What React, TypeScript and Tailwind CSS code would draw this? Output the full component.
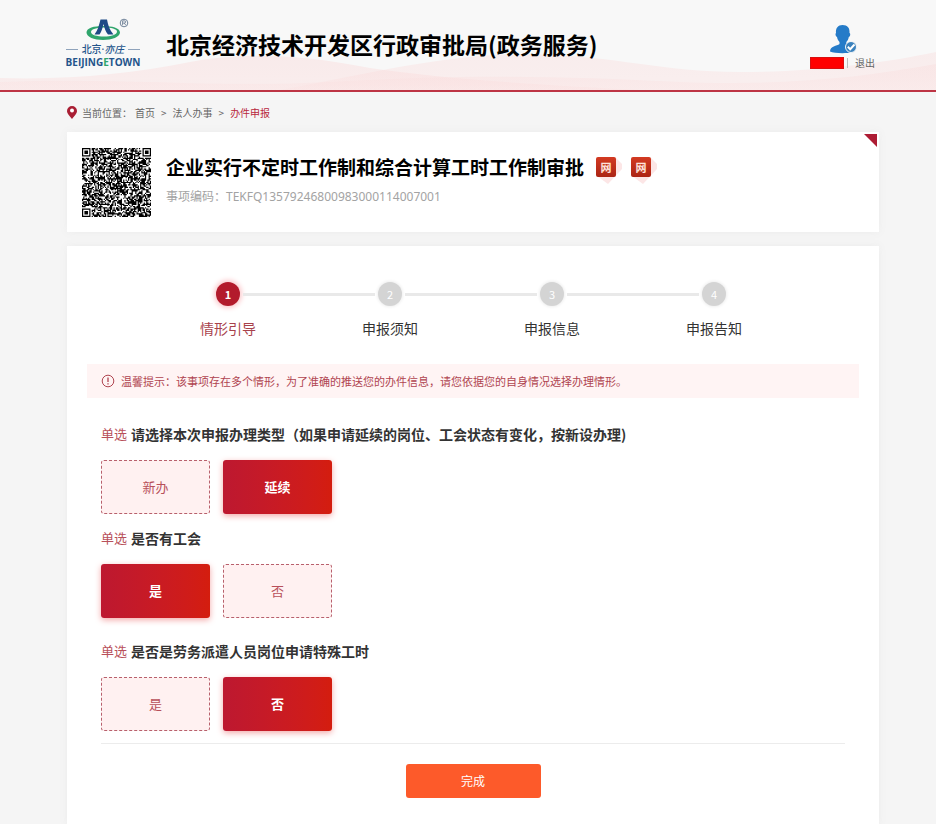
import { useState } from "react";

const SANS = "font-['Noto_Sans','Noto_Sans_CJK_SC',sans-serif]";
const CJK = "font-['Noto_Sans_CJK_SC',sans-serif]";

function Logo() {
  return (
    <div className="flex w-[74px] flex-col items-center text-[#24548b]" aria-label="北京亦庄 BEIJINGETOWN">
      <svg viewBox="0 0 74 24" className="h-6 w-[74px]" aria-hidden="true">
        <path
          fillRule="evenodd"
          d="M37 8 C46 8 54 10 54 14.500 C54 19 46 22 37 22 C28 22 20.500 19 20.500 14.500 C20.500 10 28 8 37 8Z M38 9.500 C31 9.500 25 11 25 14 C25 17 31 18.500 38 18.500 C45 18.500 51 17 51 13.500 C51 11 45 9.500 38 9.500Z"
          fill="#2fa56c"
        />
        <path d="M28.500 16.500 C32 12 33 7 34.500 1.500 H41 C42 7 43.500 12 47.500 16.500 H42 C39.500 13.500 38.500 10 37.500 6 C36.500 10 35.500 13.500 33.500 16.500Z" fill="#1d4a86" />
        <circle cx="58" cy="5" r="3.800" fill="none" stroke="#4d6480" strokeWidth="0.800" />
        <path d="M56.600 7.200V2.800H58.200Q59.600 2.800 59.600 4T58.200 5.100H56.600M58.300 5.100L59.800 7.200" fill="none" stroke="#4d6480" strokeWidth="0.700" />
      </svg>
      <div className="flex h-[14px] w-full items-center justify-between text-[10px] leading-[14px]">
        <span className="h-px w-3 bg-[#8fa3bb]" />
        <span className={`font-medium ${SANS}`}>
          北京·<i>亦庄</i>
        </span>
        <span className="h-px w-3 bg-[#8fa3bb]" />
      </div>
      <span className="font-['Open_Sans',sans-serif] text-[10px] leading-[12px] font-bold">
        BEIJING<span className="text-[#2fa56c]">E</span>TOWN
      </span>
    </div>
  );
}

function Waves() {
  return (
    <svg
      viewBox="0 0 936 40"
      preserveAspectRatio="none"
      className="absolute inset-x-0 bottom-0 -z-10 h-10 w-full"
      aria-hidden="true"
    >
      <defs>
        <linearGradient id="wave" x1="0" y1="0" x2="0" y2="1">
          <stop offset="0" stopColor="#f9d2d2" stopOpacity="0.5" />
          <stop offset="1" stopColor="#fbe3e3" stopOpacity="0.7" />
        </linearGradient>
      </defs>
      <path d="M0 28 C70 30 130 24 190 12 C240 2 300 4 370 18 C450 30 560 36 640 40 H0Z" fill="url(#wave)" opacity="0.7" />
      <path d="M280 40 C360 26 440 4 530 4 C620 6 660 22 740 22 C810 22 880 14 936 2 V40Z" fill="url(#wave)" opacity="0.6" />
      <path d="M0 32 C120 27 210 38 330 32 C460 24 560 26 680 32 C780 36 860 28 936 14 V40 H0Z" fill="url(#wave)" opacity="0.5" />
    </svg>
  );
}

function UserIcon() {
  return (
    <svg viewBox="0 0 28 30" className="h-[30px] w-7" aria-hidden="true">
      <path d="M13.500 1 C9 1 6.500 4 7 9 C6 9.500 6.500 12.500 8 13 C8.300 15 9.500 17 10.500 18 V20 C8 22 1 22 1 27.500 C5 29.500 17 29.500 23 28.500 L18 20 C17.500 19.500 17.300 19 17.300 18 C18.500 17 19.500 15 19.800 13 C21.300 12.500 21.800 9.500 20.500 9 C21 4 18.500 1 13.500 1Z" fill="#257bc8" />
      <circle cx="22" cy="23" r="5.500" fill="#3b82bd" stroke="#f7f7f7" strokeWidth="1" />
      <path d="M18.800 22.800L21.200 25.200L25.500 20.500" fill="none" stroke="#fff" strokeWidth="2" />
    </svg>
  );
}

const QR_SIZE = 57;

function finderModule(x: number, y: number): boolean | null {
  const corners = [
    [0, 0],
    [QR_SIZE - 7, 0],
    [0, QR_SIZE - 7],
  ];
  for (const [cx, cy] of corners) {
    const dx = x - cx;
    const dy = y - cy;
    if (dx >= -1 && dx <= 7 && dy >= -1 && dy <= 7) {
      const ring = Math.max(Math.abs(dx - 3), Math.abs(dy - 3));
      return ring === 3 || ring <= 1;
    }
  }
  return null;
}

function buildQr(): string {
  let seed = 20231;
  let d = "";
  for (let y = 0; y < QR_SIZE; y++) {
    for (let x = 0; x < QR_SIZE; x++) {
      seed = (seed * 1103515245 + 12345) % 2147483648;
      const fixed = finderModule(x, y);
      const dark = fixed === null ? seed / 2147483648 < 0.58 : fixed;
      if (dark) d += `M${x} ${y}h1v1h-1z`;
    }
  }
  return d;
}

const QR_PATH = buildQr();

function NetBadge() {
  return (
    <span className="relative flex size-5 items-center justify-center">
      <svg viewBox="0 0 28 28" className="absolute top-0 left-0 size-7" aria-hidden="true">
        <path d="M1 19 L20 1 L26 7 L26 12 L12 27Z" fill="#fbdcdc" opacity="0.7" />
      </svg>
      <span className="relative flex size-5 items-center justify-center rounded-[2px] bg-linear-to-b from-[#d33a22] to-[#ab2414] text-[11px] leading-none font-bold text-[#ffe3dc]">
        网
      </span>
    </span>
  );
}

const STEPS = ["情形引导", "申报须知", "申报信息", "申报告知"];

function Steps() {
  return (
    <ol className="flex px-20">
      {STEPS.map((label, i) => (
        <li key={label} className="relative flex w-[162px] flex-col items-center">
          {i > 0 && <span className="absolute top-[11px] right-1/2 mr-[15px] h-[3px] w-[132px] bg-[#e9e9e9]" />}
          <span
            className={
              i === 0
                ? "flex size-6 items-center justify-center rounded-full bg-[#b31b2c] text-[11px] font-bold text-white shadow-[0_0_5px_2px_#fbc9cc]"
                : "flex size-6 items-center justify-center rounded-full bg-[#d4d4d4] text-[11px] text-white shadow-[0_0_3px_1px_#eeeeee]"
            }
          >
            {i + 1}
          </span>
          <span className={i === 0 ? "mt-3 text-[14px] leading-5 text-[#a8424b]" : "mt-3 text-[14px] leading-5 text-[#333]"}>
            {label}
          </span>
        </li>
      ))}
    </ol>
  );
}

interface QuestionProps {
  name: string;
  title: string;
  options: string[];
  initial: string;
  className: string;
}

function Question({ name, title, options, initial, className }: QuestionProps) {
  const [value, setValue] = useState(initial);
  return (
    <fieldset className={className}>
      <legend className="flex h-5 items-center gap-1 leading-5">
        <span className="text-[13px] text-[#b8505a]">单选</span>
        <span className="text-[14px] font-bold text-[#333]">{title}</span>
      </legend>
      <div className="mt-4 flex gap-[13px]">
        {options.map((option) => (
          <label
            key={option}
            className={
              option === value
                ? "relative flex h-[54px] w-[109px] cursor-pointer items-center justify-center rounded-[3px] bg-linear-to-r from-[#bd1830] to-[#d41d0e] text-[13px] font-bold text-white shadow-[0_2px_6px_#f3a8a8]"
                : "relative flex h-[54px] w-[109px] cursor-pointer items-center justify-center rounded-[3px] border border-dashed border-[#b8606c] bg-[#fff1f1] text-[13px] text-[#b8505a]"
            }
          >
            <input
              type="radio"
              name={name}
              value={option}
              checked={option === value}
              onChange={() => setValue(option)}
              className="sr-only"
            />
            {option}
          </label>
        ))}
      </div>
    </fieldset>
  );
}

export default function App() {
  return (
    <div className={`min-h-screen bg-[#f5f5f5] ${CJK}`}>
      <header className="relative isolate flex h-[92px] items-start border-b-2 border-[#bd3444] bg-[#f8f8f8] pr-[57px] pl-[66px]">
        <Waves />
        <div className="mt-[18px]">
          <Logo />
        </div>
        <h1 className="mt-7 ml-[26px] text-[23px] leading-8 font-bold text-black">
          北京经济技术开发区行政审批局(政务服务)
        </h1>
        <div className="mt-6 ml-auto flex flex-col items-center pr-1">
          <UserIcon />
          <div className="mt-px flex items-center gap-[3px]">
            <span className="h-3 w-[34px] border border-[#d71010] bg-[#ff0000]" />
            <span className="h-[10px] w-px bg-[#bbb]" />
            <a href="#" className="ml-1 text-[10px] leading-4 text-[#666]">
              退出
            </a>
          </div>
        </div>
      </header>

      <main className="pr-[57px] pl-[67px]">
        <nav className="flex h-10 items-center text-[10px] text-[#666]" aria-label="当前位置">
          <svg viewBox="0 0 10 13" className="mr-[5px] h-[13px] w-[10px]" aria-hidden="true">
            <path d="M5 0 A5 5 0 0 0 0 5 C0 8 3 10 5 13 C7 10 10 8 10 5 A5 5 0 0 0 5 0Z" fill="#a91f34" />
            <circle cx="5" cy="4.600" r="2" fill="#fff" />
          </svg>
          <span className="mr-[3px]">当前位置：</span>
          <a href="#">首页</a>
          <span className="mx-[6px]">&gt;</span>
          <a href="#">法人办事</a>
          <span className="mx-[6px]">&gt;</span>
          <a href="#" className="text-[#b8273c]">
            办件申报
          </a>
        </nav>

        <section className="relative flex h-[100px] bg-white pt-4 pl-[15px] shadow-[0_0_8px_#ececec]">
          <svg viewBox="0 0 57 57" className="size-[69px] shrink-0" role="img" aria-label="二维码">
            <path d={QR_PATH} fill="#000" />
          </svg>
          <div className="ml-[15px]">
            <div className="mt-[5px] flex items-center">
              <h2 className="text-[19px] leading-7 font-bold text-black">企业实行不定时工作制和综合计算工时工作制审批</h2>
              <div className="ml-3 flex gap-[15px]">
                <NetBadge />
                <NetBadge />
              </div>
            </div>
            <p className={`mt-[6px] text-[12px] leading-5 text-[#a3a3a3] ${SANS}`}>事项编码：TEKFQ13579246800983000114007001</p>
          </div>
          <svg viewBox="0 0 13 13" className="absolute top-[2px] right-[2px] size-[13px]" aria-hidden="true">
            <path d="M0 0H13V13Z" fill="#ad1c34" />
          </svg>
        </section>

        <section className="mt-[14px] bg-white pt-9 pb-7 shadow-[0_0_8px_#ececec]">
          <Steps />
          <div className="mx-5 mt-[26px] flex h-[34px] items-center bg-[#fff4f4] pl-[14px] text-[11px] text-[#b04450]">
            <svg viewBox="0 0 14 14" className="mr-[6px] size-[14px]" aria-hidden="true">
              <circle cx="7" cy="7" r="5.800" fill="none" stroke="#b04450" />
              <path d="M7 3.500V8M7 9.300V10.600" stroke="#b04450" strokeWidth="1.300" />
            </svg>
            <p>温馨提示：该事项存在多个情形，为了准确的推送您的办件信息，请您依据您的自身情况选择办理情形。</p>
          </div>
          <form className="px-[34px]" onSubmit={(e) => e.preventDefault()}>
            <Question
              name="type"
              title="请选择本次申报办理类型（如果申请延续的岗位、工会状态有变化，按新设办理)"
              options={["新办", "延续"]}
              initial="延续"
              className="mt-[26px]"
            />
            <Question name="union" title="是否有工会" options={["是", "否"]} initial="是" className="mt-[14px]" />
            <Question
              name="dispatch"
              title="是否是劳务派遣人员岗位申请特殊工时"
              options={["是", "否"]}
              initial="否"
              className="mt-[23px]"
            />
            <hr className="mt-3 border-[#ececec]" />
            <button
              type="submit"
              className="mx-auto mt-5 block h-[34px] w-[135px] rounded-[3px] bg-[#fd5a2a] text-[12px] text-white"
            >
              完成
            </button>
          </form>
        </section>
      </main>
    </div>
  );
}
